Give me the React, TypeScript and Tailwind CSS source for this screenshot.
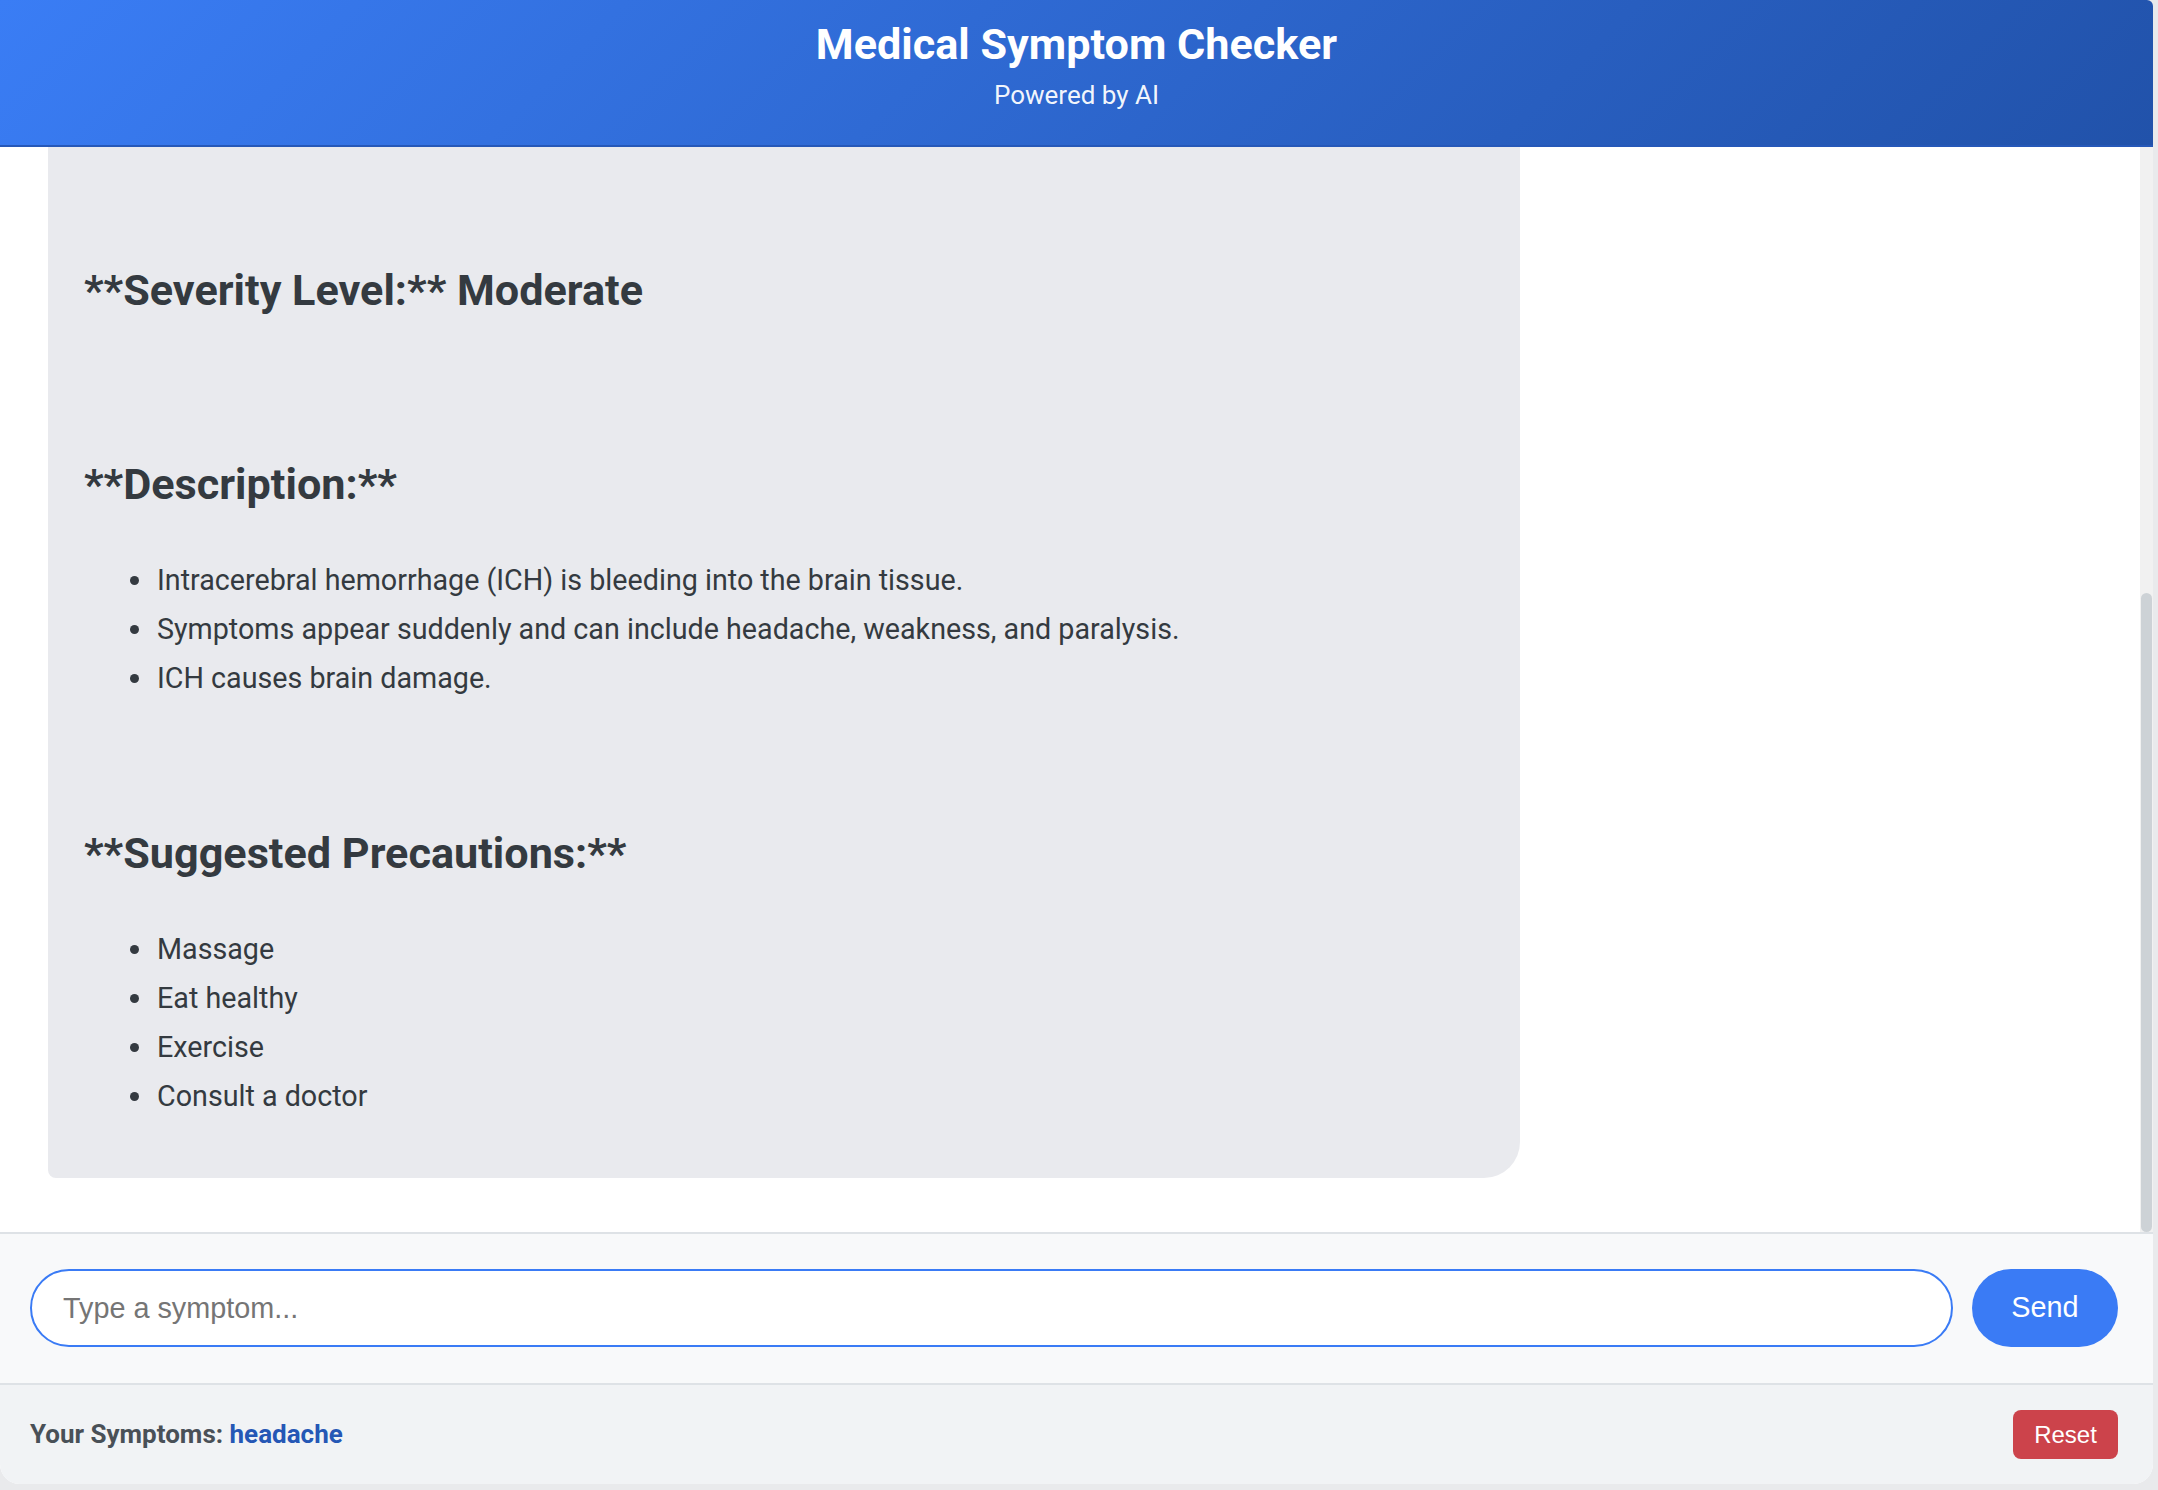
import { useLayoutEffect, useRef, useState } from 'react'

// Chat with a symptom checker bot. The message list is scrolled to the bottom,
// so only the end of the last bot answer is visible.

const conditionFacts = ['Intracerebral hemorrhage (ICH)', 'Confidence based on the reported symptoms']

const matched = ['headache']

const description = [
  'Intracerebral hemorrhage (ICH) is bleeding into the brain tissue.',
  'Symptoms appear suddenly and can include headache, weakness, and paralysis.',
  'ICH causes brain damage.',
]

const precautions = ['Massage', 'Eat healthy', 'Exercise', 'Consult a doctor']

function BulletList({ items, className = '' }: { items: string[]; className?: string }) {
  return (
    <ul className={`list-disc pl-[71px] space-y-[14px] ${className}`}>
      {items.map((item) => (
        <li key={item} className="text-[28.7px] leading-[35px] pl-[2px]">
          {item}
        </li>
      ))}
    </ul>
  )
}

function Heading({ children, className = '' }: { children: React.ReactNode; className?: string }) {
  return <h3 className={`text-[43.2px] leading-[52px] font-bold text-[#343a40] ${className}`}>{children}</h3>
}

export default function App() {
  const chatRef = useRef<HTMLDivElement>(null)
  const [thumb, setThumb] = useState({ top: 0, height: 0 })

  const updateThumb = () => {
    const el = chatRef.current
    if (!el) return
    const track = el.clientHeight
    const height = (el.clientHeight / el.scrollHeight) * track
    const top = (el.scrollTop / el.scrollHeight) * track
    setThumb({ top, height })
  }

  useLayoutEffect(() => {
    // всегда показываем последнее сообщение
    if (chatRef.current) chatRef.current.scrollTop = chatRef.current.scrollHeight
    updateThumb()
  }, [])

  return (
    <div className="min-h-[1490px] bg-[#e9eaec] font-[Roboto,sans-serif]">
      <div className="flex flex-col h-[1484px] w-[2153px] bg-white rounded-tr-[6px] rounded-b-[20px] overflow-hidden">
        {/* Header */}
        <header className="h-[147px] shrink-0 flex flex-col items-center pt-[18px] bg-linear-135 from-[#3a7df5] to-[#2152aa] border-b-2 border-[#2658b8] text-white">
          <h1 className="text-[43.2px] leading-[54px] font-bold">Medical Symptom Checker</h1>
          <p className="text-[26px] leading-[32px] mt-[7px] text-white/95">Powered by AI</p>
        </header>

        {/* Messages */}
        <div className="relative flex-1 min-h-0">
          <div
            ref={chatRef}
            onScroll={updateThumb}
            className="h-full overflow-y-auto px-[48px] pt-[30px] pb-[54px] [scrollbar-width:none]"
          >
            <div className="flex justify-start mb-[30px]">
              <div className="bg-[#e9eaee] text-[#343a40] text-[28.7px] leading-[35px] px-[36px] py-[22px] rounded-[36px] rounded-bl-[8px]">
                Hello! Describe a symptom and I will suggest a possible condition.
              </div>
            </div>

            <div className="flex justify-end mb-[30px]">
              <div className="bg-[#3a7bf5] text-white text-[28.7px] leading-[35px] px-[36px] py-[22px] rounded-[36px] rounded-br-[8px]">
                headache
              </div>
            </div>

            <div className="w-[1472px] bg-[#e9eaee] text-[#343a40] rounded-[36px] rounded-bl-[8px] pl-[36px] pr-[36px] pt-[36px] pb-[64px]">
              <Heading>**Possible Condition:**</Heading>
              <BulletList items={conditionFacts} className="mt-[52px]" />

              <Heading className="mt-[132px]">**Matched Symptoms:**</Heading>
              <BulletList items={matched} className="mt-[52px]" />

              <Heading className="mt-[132px]">**Severity Level:** Moderate</Heading>

              <Heading className="mt-[142px]">**Description:**</Heading>
              <BulletList items={description} className="mt-[52px]" />

              <Heading className="mt-[132px]">**Suggested Precautions:**</Heading>
              <BulletList items={precautions} className="mt-[52px]" />
            </div>
          </div>

          {/* scrollbar */}
          <div aria-hidden className="absolute top-0 right-0 bottom-0 w-[13px] bg-[#f1f1f1]">
            <div
              className="absolute left-[1px] right-[1px] rounded-full bg-[#cdd2d6]"
              style={{ top: thumb.top, height: thumb.height }}
            />
          </div>
        </div>

        {/* Input */}
        <div className="shrink-0 flex items-center gap-[19px] bg-[#f8f9fa] border-t-2 border-[#dee2e6] pl-[30px] pr-[35px] pt-[35px] pb-[36px]">
          <input
            type="text"
            placeholder="Type a symptom..."
            className="flex-1 h-[78px] rounded-full border-2 border-[#3a7bf5] bg-white pl-[31px] pr-[31px] text-[28.8px] font-['Liberation_Sans',Arial,sans-serif] text-[#212529] placeholder:text-[#757575] outline-none"
          />
          <button className="w-[146px] h-[78px] rounded-full bg-[#3a7bf5] text-white text-[28.8px] font-['Liberation_Sans',Arial,sans-serif]">
            Send
          </button>
        </div>

        {/* Symptoms summary */}
        <div className="h-[101px] shrink-0 flex items-center justify-between bg-[#f1f3f5] border-t-2 border-[#dee2e6] pl-[30px] pr-[35px]">
          <p className="text-[26px] font-bold text-[#495057]">
            Your Symptoms: <span className="text-[#2557b5]">headache</span>
          </p>
          <button className="w-[105px] h-[49px] rounded-[8px] bg-[#cc434b] text-white text-[24px] font-['Liberation_Sans',Arial,sans-serif]">
            Reset
          </button>
        </div>
      </div>
    </div>
  )
}
